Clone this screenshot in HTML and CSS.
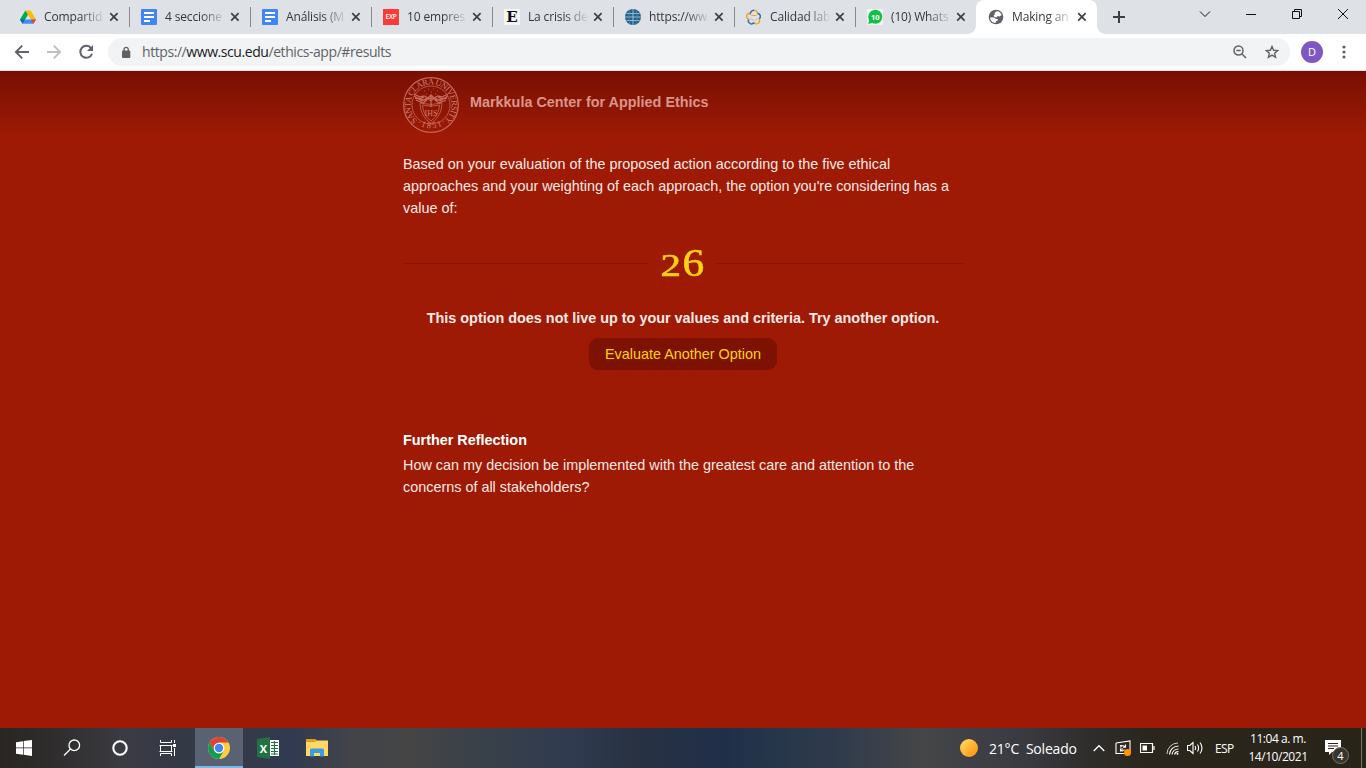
FILE: index.html
```html
<!DOCTYPE html>
<html lang="es">
<head>
<meta charset="utf-8">
<title>Making an Ethical Decision</title>
<link rel="stylesheet" href="styles.css">
</head>
<body>
<svg class="defs" width="0" height="0">
  <symbol id="close" viewBox="0 0 10 10"><path d="M1.2 1.2l7.4 7.4M8.6 1.2L1.2 8.6" stroke="#3c4043" stroke-width="1.7"/></symbol>
  <symbol id="doc" viewBox="0 0 16 16"><rect width="16" height="16" rx="1" fill="#4285f4"/><path d="M3 4h10M3 8h10M3 12h6" stroke="#fff" stroke-width="1.9"/></symbol>
</svg>
<header class="tabs">
  <div class="tab"><svg class="fav" viewBox="0 0 16 16"><path d="M5.4 1.5h5.2L16 10.500h-5z" fill="#ffba00"/><path d="M5.4 1.500L0 10.500l2.600 4.200L8 5.800z" fill="#00ac47"/><path d="M2.600 14.700h10.800L16 10.400H5.200z" fill="#4688f4"/><path d="M13.400 14.700L16 10.400h-5z" fill="#ea4335"/><path d="M0 10.400h5.200l-2.600 4.300z" fill="#0066da"/></svg><span class="title">Compartid</span><svg class="x"><use href="#close"/></svg></div>
  <div class="tab"><svg class="fav"><use href="#doc"/></svg><span class="title">4 seccione</span><svg class="x"><use href="#close"/></svg></div>
  <div class="tab"><svg class="fav"><use href="#doc"/></svg><span class="title">Análisis (M</span><svg class="x"><use href="#close"/></svg></div>
  <div class="tab"><span class="fav exp">EXP</span><span class="title">10 empres</span><svg class="x"><use href="#close"/></svg></div>
  <div class="tab"><span class="fav eco">E</span><span class="title">La crisis de</span><svg class="x"><use href="#close"/></svg></div>
  <div class="tab"><svg class="fav" viewBox="0 0 16 16"><circle cx="8" cy="8" r="8" fill="#22618a"/><path d="M8 0v16M0 8h16M1.500 4.500h13M1.500 11.500h13" stroke="#a9c4d4" stroke-width=".9" fill="none"/><path d="M5 1Q2 8 5 15M11 1q3 7 0 14" stroke="#5c8dab" stroke-width=".7" fill="none"/></svg><span class="title">https://ww</span><svg class="x"><use href="#close"/></svg></div>
  <div class="tab"><svg class="fav" viewBox="0 0 16 16" fill="none" stroke-width="1.500"><path d="M4.300 5.500A3.700 3.700 0 0 1 8 1.300" stroke="#2f6ca8"/><path d="M8 1.300a3.700 3.700 0 0 1 3.700 4.200" stroke="#eba32d"/><path d="M11.700 4.500a3 3 0 0 1 1.300 5.500" stroke="#2f6ca8"/><path d="M13 10a3 3 0 0 1-5 3.500" stroke="#eba32d"/><path d="M8 13.500A3 3 0 0 1 3 10" stroke="#2f6ca8"/><path d="M3 10.500a3 3 0 0 1 1.300-6" stroke="#eba32d"/><path d="M5.500 6.500l5 0M5 9.500l2 2M11 9.500l-2 2" stroke="#eba32d" stroke-width="1"/></svg><span class="title">Calidad lab</span><svg class="x"><use href="#close"/></svg></div>
  <div class="tab"><svg class="fav" viewBox="0 0 16 16"><rect width="16" height="16" rx="2" fill="#f5f8f6"/><path d="M1.200 15l1-3.700A7 7 0 1 1 5 14z" fill="#12c143"/><text x="8.200" y="10.900" text-anchor="middle" class="wa">10</text></svg><span class="title">(10) Whats</span><svg class="x"><use href="#close"/></svg></div>
  <div class="tab active"><svg class="fav" viewBox="0 0 16 16"><circle cx="8" cy="8" r="7.300" fill="#5f6368"/><path d="M8.500 2.200c2.500 0 4.500 1.600 5.200 3.900l-2.200 1.300-1.700-.4-1 1.200H7L5.500 7l1.200-1.500V3.800zM2.100 8.500h4.200l1.500 1.500h2v1.600l-1.600.5-.6 1.700C4.500 14 2.300 11.500 2.100 8.500z" fill="#fff"/></svg><span class="title">Making an</span><svg class="x"><use href="#close"/></svg></div>
  <svg class="plus" width="12" height="12" viewBox="0 0 12 12"><path d="M6 0v12M0 6h12" stroke="#3c4043" stroke-width="2"/></svg>
  <div class="winbtns">
    <svg width="12" height="12" viewBox="0 0 12 12"><path d="M1 3.500l5 5 5-5"/></svg>
    <svg width="12" height="12" viewBox="0 0 12 12"><path d="M1 6.500h10"/></svg>
    <svg width="12" height="12" viewBox="0 0 12 12"><path d="M1.500 3.500h7v7h-7zM3.500 3.500v-2h7v7h-2"/></svg>
    <svg width="12" height="12" viewBox="0 0 12 12"><path d="M1 1l10 10M11 1L1 11"/></svg>
  </div>
</header>
<nav class="toolbar">
  <svg width="16" height="16" viewBox="0 0 16 16" fill="none" stroke="#5f6368" stroke-width="1.900"><path d="M15 8H2M8.200 1.700L1.900 8l6.300 6.300"/></svg>
  <svg width="16" height="16" viewBox="0 0 16 16" fill="none" stroke="#bdc0c3" stroke-width="1.900"><path d="M1 8h13M7.800 1.700L14.100 8l-6.300 6.300"/></svg>
  <svg width="16" height="16" viewBox="0 0 16 16"><path d="M13.200 4.300A6 6 0 1 0 14 9.700" fill="none" stroke="#5f6368" stroke-width="2"/><path d="M15 1v6H9z" fill="#5f6368"/></svg>
  <div class="address">
    <svg width="10" height="13" viewBox="0 0 10 13"><rect x="1" y="4.500" width="8.300" height="7.500" rx="1" fill="#5f6368"/><path d="M3 5V3.500a2.100 2.100 0 0 1 4.300 0V5" fill="none" stroke="#5f6368" stroke-width="1.300"/></svg>
    <span class="url">https://<b>www.scu.edu</b>/ethics-app/#results</span>
    <svg width="14" height="14" viewBox="0 0 14 14" fill="none" stroke="#5f6368" stroke-width="1.500"><circle cx="5.500" cy="5.500" r="4.500"/><path d="M3.300 5.500h4.400M8.800 8.800L13 13"/></svg>
    <svg class="star" width="14" height="14" viewBox="0 0 14 14"><path d="M7 1.500l1.600 3.800 4.100.3-3.100 2.700 1 4L7 10.100l-3.600 2.200 1-4-3.100-2.700 4.100-.3z" fill="none" stroke="#5f6368" stroke-width="1.400"/></svg>
  </div>
  <span class="avatar">D</span>
  <svg class="menu" width="4" height="14" viewBox="0 0 4 14" fill="#5f6368"><circle cx="2" cy="2" r="1.600"/><circle cx="2" cy="7" r="1.600"/><circle cx="2" cy="12" r="1.600"/></svg>
</nav>
<main class="page">
  <div class="content">
    <div class="brand">
      <svg class="seal" viewBox="0 0 56 56" fill="none" stroke="#c56a5c" stroke-width=".8">
        <circle cx="28" cy="28" r="27.300" stroke-width="1.200"/><circle cx="28" cy="28" r="19"/>
        <path id="ring" d="M14.500 43.500A20.500 20.500 0 1 1 41.500 43.500" stroke="none"/>
        <path id="base" d="M13 46.500A26 26 0 0 0 43 46.500" stroke="none"/>
        <text class="ring"><textPath href="#ring" textLength="99">SANTA CLARA UNIVERSITY</textPath></text>
        <text class="ring"><textPath href="#base" startOffset="1" textLength="31">·1851·</textPath></text>
        <path d="M17 26Q28 29 39 26Q39 39 28 46.500Q17 39 17 26zM19.500 28Q28 30.500 36.500 28Q36 38 28 44Q20 38 19.500 28z"/>
        <path d="M11 17l6 3 4-1 4 2 3-3 3 3 4-2 4 1 6-3M11 19l8 5 5-3 4 3 4-3 5 3 8-5M13 23l7 3 4-3M43 23l-7 3-4-3M15 21l6 2 7-2 7 2 6-2M28 19v11M12 21l5 1 4-2M44 21l-5 1-4-2" stroke-width="1.300"/>
        <path d="M21 14h1M25 12h1M30 12h1M34 14h1M23 17h1M28 15h1M32 17h1"/>
        <text class="ihs" x="28" y="38.500" text-anchor="middle">IHS</text>
      </svg>
      <span class="center-name">Markkula Center for Applied Ethics</span>
    </div>
    <p class="intro">Based on your evaluation of the proposed action according to the five ethical<br>approaches and your weighting of each approach, the option you're considering has a<br>value of:</p>
    <div class="score"><i></i><strong><span class="two">2</span><span class="six">6</span></strong><i></i></div>
    <p class="verdict">This option does not live up to your values and criteria. Try another option.</p>
    <a class="button">Evaluate Another Option</a>
    <h3>Further Reflection</h3>
    <p class="reflect">How can my decision be implemented with the greatest care and attention to the<br>concerns of all stakeholders?</p>
  </div>
</main>
<footer class="taskbar">
  <div class="app"><svg width="16" height="16" viewBox="0 0 16 16" fill="#fff"><path d="M0 2.200L7 1.200v6.300H0zM7.700 1.100L16 0v7.500H7.700zM0 8.300h7v6.400l-7-1zM7.700 8.300H16V16l-8.300-1.200z"/></svg></div>
  <div class="app"><svg width="18" height="18" viewBox="0 0 18 18" fill="none" stroke="#fff" stroke-width="1.300"><circle cx="11.300" cy="6.300" r="5.300"/><path d="M7.500 10L1 16.500"/></svg></div>
  <div class="app"><svg width="16" height="16" viewBox="0 0 16 16"><circle cx="8" cy="8" r="6.700" fill="none" stroke="#fff" stroke-width="2.100"/></svg></div>
  <div class="app"><svg width="18" height="16" viewBox="0 0 18 16" fill="none" stroke="#fff"><path d="M1.500 0v2.500h11V0M.5 5.500h13M1.500 5.500v6M12.500 5.500v6M.5 11.500h13M1.500 16v-2.500h11V16M15.500 0v3M15.500 8v8"/><path d="M14 4h3v3h-3z" fill="#fff" stroke="none"/></svg></div>
  <div class="app running"><svg width="22" height="22" viewBox="0 0 22 22"><circle cx="11" cy="11" r="11" fill="#ffcd40"/><path d="M1.500 5.500A11 11 0 0 1 20.500 5.500H11L6.200 13.800z" fill="#db4437"/><path d="M1.500 5.500A11 11 0 0 0 11 22L15.800 13.800A5.500 5.500 0 0 1 6.200 13.800z" fill="#0f9d58"/><circle cx="11" cy="11" r="5.300" fill="#fff"/><circle cx="11" cy="11" r="4.200" fill="#4285f4"/></svg></div>
  <div class="app"><svg width="22" height="22" viewBox="0 0 22 22"><path d="M12 3h10v16H12z" fill="#fff"/><path d="M14 5.500h7M14 8.500h7M14 11.500h7M14 14.500h7M14 17h7M17.500 4v14" stroke="#207245" stroke-width="1.100"/><path d="M0 2l13-2v22L0 20z" fill="#207245"/><text class="xl" x="6.500" y="15.500" text-anchor="middle">X</text></svg></div>
  <div class="app"><svg width="22" height="20" viewBox="0 0 22 20"><path d="M0 1h9l1.500 1.500H22V18H0z" fill="#ffd867"/><path d="M0 1h9l1 2-1 1H0z" fill="#dfa11b"/><path d="M4 18.500V12q0-1.500 1.500-1.500h11q1.500 0 1.500 1.500v6.500h-4V15H8v3.500z" fill="#3b9cdf"/></svg></div>
  <div class="tray">
    <span class="sun"></span><span class="weather">21°C&nbsp; Soleado</span>
    <svg class="chev" width="12" height="8" viewBox="0 0 12 8" fill="none" stroke="#fff" stroke-width="1.300"><path d="M.7 7L6 1.700 11.300 7"/></svg>
    <svg class="sync" width="16" height="16" viewBox="0 0 16 16" fill="none" stroke="#fff" stroke-width="1.100"><path d="M1 3l14-2v11M1 3v10.500h8M5 5.500h2M10.500 4.500v2.800H8M10 7a2.500 2.500 0 0 0-4.500.5M5.500 11.500V9H8M5.500 10q2 2 4-.5"/><circle cx="12.500" cy="12.500" r="3.500" fill="#ff9500" stroke="none"/></svg>
    <svg class="batt" width="15" height="10" viewBox="0 0 15 10"><path d="M.5.500h12v9H.5zM14 3v4" fill="none" stroke="#fff" stroke-width="1.200"/><path d="M2.500 2.500H7v5H2.500z" fill="#fff"/></svg>
    <svg class="wifi" width="13" height="13" viewBox="0 0 13 13" fill="none" stroke="#fff"><path d="M1 12A11 11 0 0 1 12 1" opacity=".75"/><path d="M3.500 12.500A9 9 0 0 1 12.500 4M6 12.500A6.500 6.500 0 0 1 12.500 7M8.500 12.500A4 4 0 0 1 12.500 9.500" stroke-width="1.100"/><circle cx="11.500" cy="11.800" r="1" fill="#fff" stroke="none"/></svg>
    <svg class="vol" width="17" height="14" viewBox="0 0 17 14" fill="none" stroke="#fff" stroke-width="1.100"><path d="M.5 4.500h2.300L6 1.500v11l-3.200-3H.5zM8 5q1.300 2 0 4M10.500 3.500q2.200 3.500 0 7M13 1.500q4 5.500 0 11"/></svg>
    <span class="lang">ESP</span>
    <span class="clock"><span>11:04 a. m.</span><span>14/10/2021</span></span>
    <span class="notes"><svg width="16" height="16" viewBox="0 0 16 16"><path d="M0 0h16v12H7l-3 3v-3H0z" fill="#fff"/><path d="M3 3.500h10M3 6h10M3 8.500h6" stroke="#2c261d"/></svg><span class="badge">4</span></span>
    <span class="peek"></span>
  </div>
</footer>
</body>
</html>
```
FILE: styles.css
```css
* { box-sizing: border-box; }
body { margin: 0; width: 1366px; height: 768px; overflow: hidden; display: flex; flex-direction: column; font-family: "Open Sans", "Noto Sans", sans-serif; }
svg { display: block; flex: none; }
.defs { position: absolute; }

.tabs { height: 34px; background: #dee1e6; display: flex; padding-left: 8px; }
.tab { width: 121px; height: 34px; display: flex; align-items: center; padding-left: 12px; }
.tab:nth-child(n+2):not(.active) { background: linear-gradient(#85888c, #85888c) 0 7px / 1px 20px no-repeat; }
.fav { width: 16px; height: 16px; flex: none; }
.title { width: 60px; margin-left: 8px; height: 18px; line-height: 17px; white-space: nowrap; font-size: 12px; letter-spacing: -.15px; color: #34383b; -webkit-mask-image: linear-gradient(90deg, #000 60%, transparent 102%); mask-image: linear-gradient(90deg, #000 60%, transparent 102%); }
.x { width: 10px; height: 10px; margin-left: 5px; }
.active { position: relative; background: #fff; border-radius: 8px 8px 0 0; }
.active::before, .active::after { content: ""; position: absolute; bottom: 0; width: 8px; height: 8px; }
.active::before { left: -8px; background: radial-gradient(circle at 0 0, transparent 7.5px, #fff 8px); }
.active::after { right: -8px; background: radial-gradient(circle at 100% 0, transparent 7.5px, #fff 8px); }
.exp { background: #fb3c36; color: #fff; font: 600 6.5px/16px "Open Sans", sans-serif; text-align: center; letter-spacing: -.2px; }
.eco { background: #f4f4f4; color: #111; font: 700 15px/16px "DejaVu Serif", serif; text-align: center; }
.wa { font: 700 7.500px "Open Sans", sans-serif; fill: #fff; }
.plus { margin: 11px 0 0 16px; }
.winbtns { margin-left: auto; padding: 8px 17px 0 0; display: flex; gap: 34px; }
.winbtns path { fill: none; stroke: #111; stroke-width: 1; }

.toolbar { height: 37px; background: #fff; border-bottom: 1px solid #dcdedf; display: flex; align-items: center; padding: 0 20px 0 14px; }
.toolbar > svg { margin-right: 16px; }
.address { width: 1182px; margin-left: -2px; height: 28px; border-radius: 14px; background: #f1f3f4; display: flex; align-items: center; padding: 0 11px 0 13px; }
.url { flex: 1; margin-left: 11px; font-size: 14px; line-height: 20px; color: #5f6368; letter-spacing: -.43px; }
.url b { font-weight: 400; color: #202124; }
.star { margin-left: 18px; }
.avatar { width: 22px; height: 22px; border-radius: 50%; margin-left: 11px; background: #7e57c2; color: #fff; font-size: 11px; line-height: 22px; text-align: center; }
.toolbar > .menu { margin: 0 0 0 auto; }

.page { flex: 1; background: linear-gradient(#780f02, #9e1a05 66px); font: 14.400px/22px "Liberation Sans", Arial, sans-serif; color: #f8e9e6; display: flex; justify-content: center; }
.content { width: 560px; display: flex; flex-direction: column; }
.brand { display: flex; padding-top: 6px; height: 82px; }
.seal { width: 56px; height: 56px; }
.ring { font: 8.500px "Liberation Serif", serif; fill: #d27f72; stroke: none; }
.ihs { font: 8px "Liberation Serif", serif; fill: #d27f72; stroke: none; }
.center-name { margin: 14px 0 0 11px; font-weight: 700; color: #d9958a; }
.page p { margin: 0; white-space: nowrap; }
.score { display: flex; justify-content: space-between; align-items: center; height: 44px; margin-top: 22px; }
.score i { width: 246px; height: 1px; background: #851204; }
.score strong { display: flex; align-items: baseline; padding-top: 2px; font: 400 41px/44px "Liberation Serif", serif; color: #fcd116; -webkit-text-stroke: .6px #fcd116; }
.score span { display: block; transform-origin: center; }
.two { font-size: 31px; transform: scaleX(1.320); margin-right: 4px; }
.six { transform: scaleX(1.060); }
.page .verdict { margin-top: 22px; text-align: center; font-weight: 700; }
.button { align-self: center; width: 188px; height: 32px; margin-top: 9px; border-radius: 9px; background: #7d1102; color: #fcd116; line-height: 32px; text-align: center; }
h3 { margin: 59px 0 3px; font-size: inherit; color: #fff; }

.taskbar { height: 40px; display: flex; color: #fff; background: linear-gradient(90deg, #292622 0, #302e2e 60px, #3b3b43 125px, #343946 185px, #343a49 250px, #303a50 290px, #424449 350px, #454545 410px, #38404a 490px, #303b50 570px, #273142 640px, #202f49 725px, #25364a 770px, #303b4c 840px, #454647 920px, #404146 965px, #393a40 1030px, #302e2e 1080px, #2a261d 1150px, #292418); }
.app { width: 48px; display: flex; align-items: center; justify-content: center; }
.app:nth-child(n+6) { width: 49px; }
.app:nth-child(4) { width: 51px; padding-right: 3px; }
.running { background: #596273; border-bottom: 2px solid #76b9ed; padding-top: 2px; }
.xl { font: 700 11px "Open Sans", sans-serif; fill: #fff; }
.tray { margin-left: auto; display: flex; align-items: center; }
.sun { width: 18px; height: 18px; border-radius: 50%; background: linear-gradient(135deg, #ffdf65, #ff8c0a); }
.weather { width: 92px; margin-left: 11px; font-size: 14px; letter-spacing: -.2px; white-space: nowrap; }
.chev { margin-left: 12px; }
.sync { margin-left: 10px; }
.batt { margin-left: 9px; }
.wifi { margin-left: 11px; }
.vol { margin-left: 8px; }
.lang { width: 20px; margin-left: 11px; font-size: 12px; letter-spacing: -.6px; }
.clock { width: 62px; margin-left: 12px; display: flex; flex-direction: column; align-items: center; font-size: 12px; line-height: 18px; letter-spacing: -.45px; white-space: nowrap; }
.notes { position: relative; margin-left: 16px; }
.badge { position: absolute; left: 7px; top: 7px; width: 17px; height: 17px; border: 1px solid #77746e; border-radius: 50%; background: #38352f; font-size: 11px; line-height: 15px; text-align: center; }
.peek { width: 1px; height: 40px; background: #77736d; margin: 0 4px 0 20px; }
```
